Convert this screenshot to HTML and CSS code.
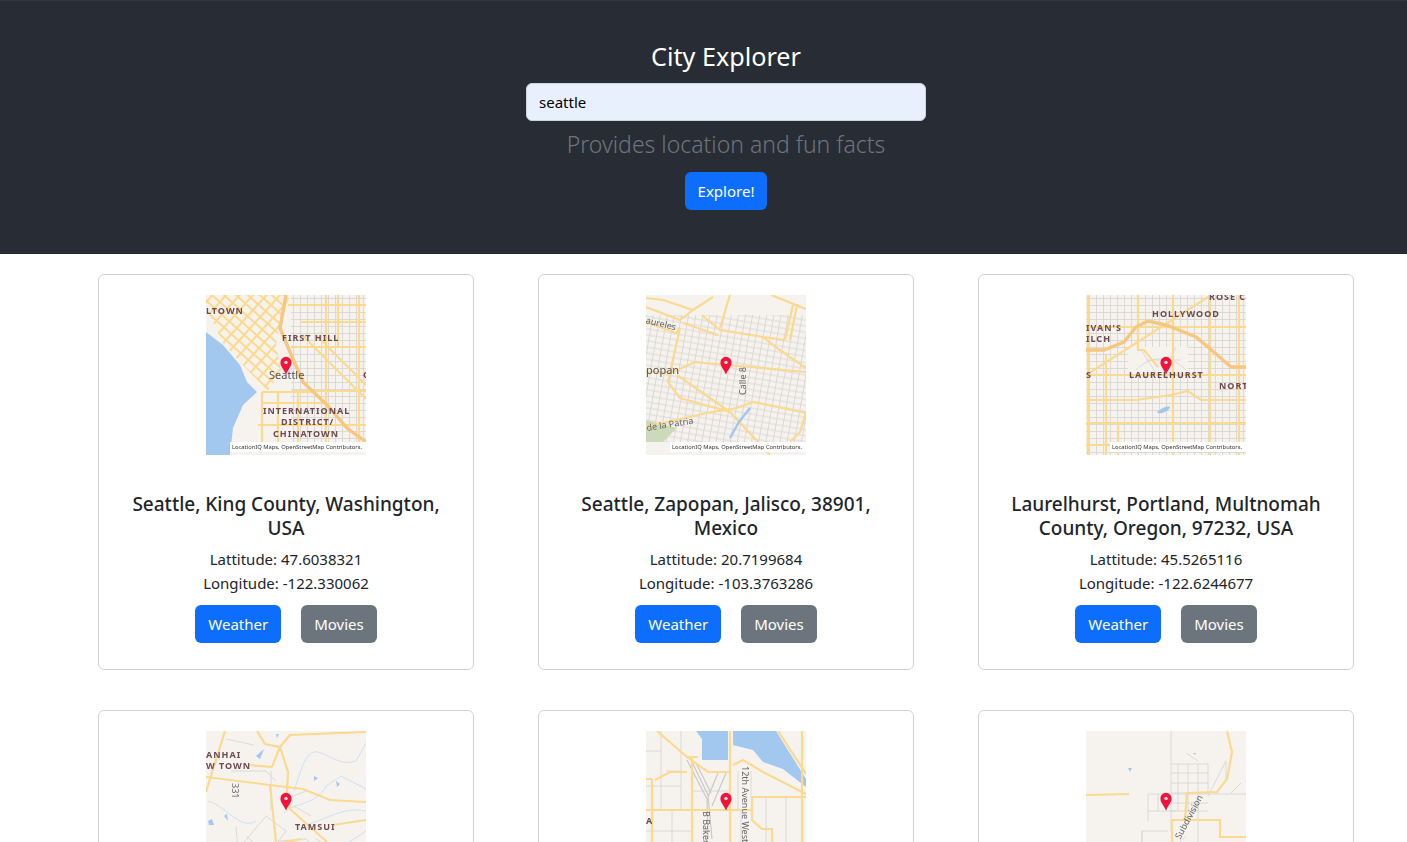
FILE: index.html
```html
<!DOCTYPE html>
<html lang="en">
<head>
  <meta charset="UTF-8" />
  <meta name="viewport" content="width=device-width, initial-scale=1" />
  <title>City Explorer</title>
  <link rel="stylesheet" href="styles.css">
</head>
<body>
  <svg class="defs" width="0" height="0">
    <defs>
      <pattern id="streets" width="7" height="7" patternUnits="userSpaceOnUse">
        <path class="minor" d="M0 3.5H7M3.5 0V7"/>
      </pattern>
      <pattern id="streets-tilt" width="7" height="6" patternUnits="userSpaceOnUse" patternTransform="rotate(10)">
        <path class="minor" d="M0 3H7M3.5 0V6"/>
      </pattern>
      <pattern id="downtown" width="10" height="8" patternUnits="userSpaceOnUse" patternTransform="rotate(42)">
        <path class="road" d="M0 4H10M5 0V8"/>
      </pattern>
    </defs>
    <symbol id="pin" viewBox="0 0 160 160">
      <path class="pin" d="M80 79.5C77.5 73.5 74.4 71.5 74.4 67.4A5.6 5.6 0 0 1 85.6 67.4C85.6 71.5 82.5 73.5 80 79.5Z"/>
      <circle class="pin-dot" cx="80" cy="67.4" r="1.7"/>
    </symbol>
  </svg>

  <header class="top">
    <h2 class="title">City Explorer</h2>
    <form class="search">
      <input class="search-input" type="text" value="seattle" />
      <p class="lead">Provides location and fun facts</p>
      <button class="btn btn-blue" type="button">Explore!</button>
    </form>
  </header>

  <main class="cards">
    <div class="card">
      <svg class="map" viewBox="0 0 160 160">
        <path class="water" d="M0 37L17 50L34 70L41 87L51 97L37 110L27 133L24 160H0Z"/>
        <rect x="85" y="0" width="75" height="147" fill="url(#streets)"/>
        <path d="M0 12L0 0H85L75 20L70 50L75 75L62 96L35 68L17 48Z" fill="url(#downtown)"/>
        <path class="road" d="M82 10H160M95 27H160M85 52H160M120 0V147M153 0V147M132 0V52M86 96H160M56 97H110M56 108H120M52 130H160M56 97V147M72 97V147M92 97V147M96 40L160 104M110 40L160 90"/>
        <path class="road-wide" d="M80 0L74 33L84 57L97 87L121 110L141 133L160 147"/>
        <text class="place" x="0" y="19">LTOWN</text>
        <text class="place" x="76" y="46">FIRST HILL</text>
        <text class="place" x="157" y="83">C</text>
        <text class="town" x="63" y="84">Seattle</text>
        <text class="place" x="57" y="119">INTERNATIONAL</text>
        <text class="place" x="75" y="130">DISTRICT/</text>
        <text class="place" x="67" y="142">CHINATOWN</text>
        <rect class="credit-box" x="24" y="147" width="136" height="10"/>
        <text class="credit" x="26" y="154">LocationIQ Maps, OpenStreetMap Contributors.</text>
        <use href="#pin"/>
      </svg>
      <h5 class="card-title">Seattle, King County, Washington, USA</h5>
      <p class="coord">Lattitude: 47.6038321</p>
      <p class="coord">Longitude: -122.330062</p>
      <div class="actions">
        <button class="btn btn-blue" type="button">Weather</button>
        <button class="btn btn-gray" type="button">Movies</button>
      </div>
    </div>

    <div class="card">
      <svg class="map" viewBox="0 0 160 160">
        <path class="green" d="M0 125L31 133L17 147H0Z"/>
        <rect x="0" y="20" width="160" height="127" fill="url(#streets-tilt)"/>
        <path class="road" d="M0 3L17 5L47 15L67 2M47 15L34 25L0 12M0 27L30 38L34 33L22 87L34 103L84 117L124 160M84 0L74 33M56 20L74 35L117 42L131 53L160 73M37 28L72 40M139 45L147 10H151L144 45M117 42L139 45M0 77H27L49 67L160 77M31 80L84 117M0 132L61 118L91 113L107 107L160 118M144 147L154 137L160 117M125 0L160 14"/>
        <path class="water-line" d="M84 143L93 127L104 113"/>
        <text class="road-name" transform="rotate(14 0 25)" x="0" y="28">aureles</text>
        <text class="road-name" transform="rotate(-90 100 100)" x="100" y="100">Calle 8</text>
        <text class="town" x="0" y="79">popan</text>
        <text class="road-name" transform="rotate(-9 0 130)" x="0" y="136">de la Patria</text>
        <rect class="credit-box" x="24" y="147" width="136" height="10"/>
        <text class="credit" x="26" y="154">LocationIQ Maps, OpenStreetMap Contributors.</text>
        <use href="#pin"/>
      </svg>
      <h5 class="card-title">Seattle, Zapopan, Jalisco, 38901, Mexico</h5>
      <p class="coord">Lattitude: 20.7199684</p>
      <p class="coord">Longitude: -103.3763286</p>
      <div class="actions">
        <button class="btn btn-blue" type="button">Weather</button>
        <button class="btn btn-gray" type="button">Movies</button>
      </div>
    </div>

    <div class="card">
      <svg class="map" viewBox="0 0 160 160">
        <rect x="0" y="0" width="160" height="160" fill="url(#streets)"/>
        <rect x="42" y="52" width="60" height="26" class="blank"/>
        <path class="minor" d="M50 75C65 60 85 60 100 75M55 55L70 78M90 52L78 78M60 65H95"/>
        <path class="road" d="M0 80H160M0 105H50L85 100L102 96L115 105H160M0 128H160M0 150H160M2 0V160M20 60V160M32 128V160M52 0V55L58 55L72 72M87 0V160M124 0V160M153 0V160M0 32H122M122 32H160M0 80L122 2"/>
        <path class="road-wide" d="M0 55H18L38 47L50 32L62 26L80 30L110 42L122 52L145 72H160"/>
        <path class="water" d="M71 117C76 112 85 110 84 113C80 118 72 120 71 117Z"/>
        <text class="place" x="123" y="5">ROSE C</text>
        <text class="place" x="66" y="22">HOLLYWOOD</text>
        <text class="place" x="0" y="36">IVAN'S</text>
        <text class="place" x="0" y="47">ILCH</text>
        <text class="place" x="0" y="83">S</text>
        <text class="place" x="43" y="83">LAURELHURST</text>
        <text class="place" x="133" y="94">NORT</text>
        <rect class="credit-box" x="24" y="147" width="136" height="10"/>
        <text class="credit" x="26" y="154">LocationIQ Maps, OpenStreetMap Contributors.</text>
        <use href="#pin"/>
      </svg>
      <h5 class="card-title">Laurelhurst, Portland, Multnomah County, Oregon, 97232, USA</h5>
      <p class="coord">Lattitude: 45.5265116</p>
      <p class="coord">Longitude: -122.6244677</p>
      <div class="actions">
        <button class="btn btn-blue" type="button">Weather</button>
        <button class="btn btn-gray" type="button">Movies</button>
      </div>
    </div>

    <div class="card">
      <svg class="map" viewBox="0 0 160 160">
        <path class="stream" d="M88 60C95 40 100 15 115 22C125 25 135 35 150 30L160 12M78 82C90 70 110 75 120 55L135 45L160 58M2 70C20 75 35 100 50 90M95 95C120 90 135 75 160 80M110 108L130 120L160 100"/>
        <path class="minor" d="M20 8L48 14M25 40H60L70 50M65 40V80M75 70L100 60M88 75L105 85M35 115L60 85L80 100L65 120M40 105L55 118M72 110L100 108L110 120M30 95L32 120"/>
        <path class="road" d="M19 0L0 61M0 46L64 54L97 58L124 69L160 71M42 34L66 36M51 0L59 13L74 16L84 4L160 1M74 16L66 36M74 16L82 41L81 61L84 78L121 111M64 54L70 111M127 94L160 89M70 113L95 108"/>
        <path class="water" d="M50 25L58 18L54 28ZM2 90L6 88L8 94L3 94ZM18 85L21 83L22 90ZM108 45L112 47L108 50ZM130 50L134 53L131 56ZM70 3L73 3L71 7Z"/>
        <text class="place" x="0" y="27">ANHAI</text>
        <text class="place" x="0" y="38">W TOWN</text>
        <text class="place" x="89" y="99">TAMSUI</text>
        <text class="road-name" transform="rotate(90 26 52)" x="26" y="52">331</text>
        <use href="#pin"/>
      </svg>
    </div>

    <div class="card">
      <svg class="map" viewBox="0 0 160 160">
        <path class="water" d="M50 0L56 8V29H82V0ZM87 0V14L107 19L117 31L137 38L160 56V48L130 0Z"/>
        <path class="minor" d="M15 0V80M35 0V80M0 20H15M0 55H35M20 40H35M92 40V80M105 40V66M120 66V111M140 66V111M0 100H46M26 80V111M95 80V111M46 60H84"/>
        <path class="rail" d="M41 29L61 68L62 108M45 29L62 64L66 108M50 32L65 62M80 42L66 75M72 42L62 66"/>
        <path class="road" d="M11 0L41 26L62 41H84M41 26H52M9 49L24 41H41M84 0V111M0 79H107M87 34L97 29L117 41L160 63M106 66H160M106 66V89L116 98H126V111M156 0V111M132 0L160 43M46 26V111M6 48V111M0 48H6"/>
        <text class="place" x="0" y="93">A</text>
        <text class="road-name" transform="rotate(90 96 35)" x="96" y="35">12th Avenue West</text>
        <text class="road-name" transform="rotate(90 59 80)" x="59" y="82">B Baker</text>
        <use href="#pin"/>
      </svg>
    </div>

    <div class="card">
      <svg class="map" viewBox="0 0 160 160">
        <path class="minor" d="M85 0V100M85 33H122M85 42H122M85 52H122M85 62H122M85 72H122M85 80H122M92 33V80M102 33V80M112 33V80M122 33V62M62 63H160M62 80H90M62 63V90M72 63V80M80 63V80M122 65L140 30V50M112 72L100 95M56 120V100H82M56 100V130M60 120H85L100 105M112 65V115M145 62L155 52M112 30L100 22"/>
        <path class="road" d="M0 64L43 63M141 0L146 21L141 48L131 61L101 62L99 88M86 89H134V106H160M86 89V111"/>
        <path class="water" d="M42 37H46L44 41ZM107 22L110 22L109 24Z"/>
        <text class="road-name" transform="rotate(-62 93 107)" x="92" y="109">Subdivision</text>
        <use href="#pin"/>
      </svg>
    </div>
  </main>
</body>
</html>
```

FILE: styles.css
```css
body {
  margin: 0;
  height: 100vh;
  overflow: hidden;
  background: #fff;
  color: #212529;
  font-family: "Noto Sans", sans-serif;
  font-size: 16px;
  line-height: 24px;
}

.defs {
  position: absolute;
}

.top {
  height: 254px;
  box-sizing: border-box;
  padding: 39px 0 0 45px;
  border-top: 1px solid #32363f;
  background: #282c34;
  color: white;
  text-align: center;
}

.title {
  margin: 0 0 10px;
  font-size: 25.2px;
  font-weight: 400;
  line-height: 33px;
}

.search-input {
  display: block;
  width: 400px;
  height: 38px;
  margin: 0 auto;
  padding: 6px 12px;
  box-sizing: border-box;
  background: #e8f0fe;
  border: 1px solid #ced4da;
  border-radius: 6px;
  color: #000;
  font: inherit;
  font-size: 15px;
}

.lead {
  margin: 8px 0 13px;
  color: #6c757d;
  font-size: 23px;
  font-weight: 300;
  line-height: 30px;
}

.btn {
  height: 38px;
  padding: 0 12px;
  border: 1px solid transparent;
  border-radius: 6px;
  color: white;
  font: inherit;
  font-size: 15px;
  cursor: pointer;
}

.btn-blue {
  background: #0d6efd;
}

.btn-gray {
  background: #6c757d;
}

.cards {
  display: grid;
  grid-template-columns: repeat(3, 376px);
  grid-auto-rows: 396px;
  gap: 40px 64px;
  padding: 20px 0 0 98px;
}

.card {
  padding: 20px 20px 0;
  box-sizing: border-box;
  border: 1px solid #d2d3d4;
  border-radius: 6px;
  text-align: center;
}

.map {
  display: block;
  width: 160px;
  height: 160px;
  margin: 0 auto 37px;
  background: #f6f3ef;
  filter: blur(0.35px);
}

.water {
  fill: #a2c8f0;
}

.green {
  fill: #c9dcb4;
}

.blank {
  fill: #f6f3ef;
}

.road, .road-wide, .minor, .stream, .water-line, .rail {
  fill: none;
}

.road {
  stroke: #fbd98f;
  stroke-width: 2.2;
}

.road-wide {
  stroke: #f8c67e;
  stroke-width: 3.4;
}

.minor {
  stroke: #d6d3cf;
  stroke-width: 0.8;
}

.rail {
  stroke: #c9c9c9;
  stroke-width: 1.2;
}

.stream {
  stroke: #b5d3f2;
  stroke-width: 0.6;
}

.water-line {
  stroke: #a2c8f0;
  stroke-width: 2.5;
}

.place {
  fill: #6e4a50;
  font-size: 9px;
  font-weight: 700;
  letter-spacing: 1px;
}

.town {
  fill: #555;
  font-size: 11px;
}

.road-name {
  fill: #666;
  font-size: 9px;
}

.credit-box {
  fill: #fff;
}

.credit {
  fill: #333;
  font-size: 5.8px;
}

.pin {
  fill: #f2123c;
}

.pin-dot {
  fill: #f6e7dc;
}

.card-title {
  margin: 0 0 7px;
  font-size: 19px;
  font-weight: 500;
  line-height: 24px;
}

.coord {
  margin: 0;
  font-size: 15px;
}

.actions {
  display: flex;
  justify-content: center;
  gap: 20px;
  margin-top: 10px;
}
```
